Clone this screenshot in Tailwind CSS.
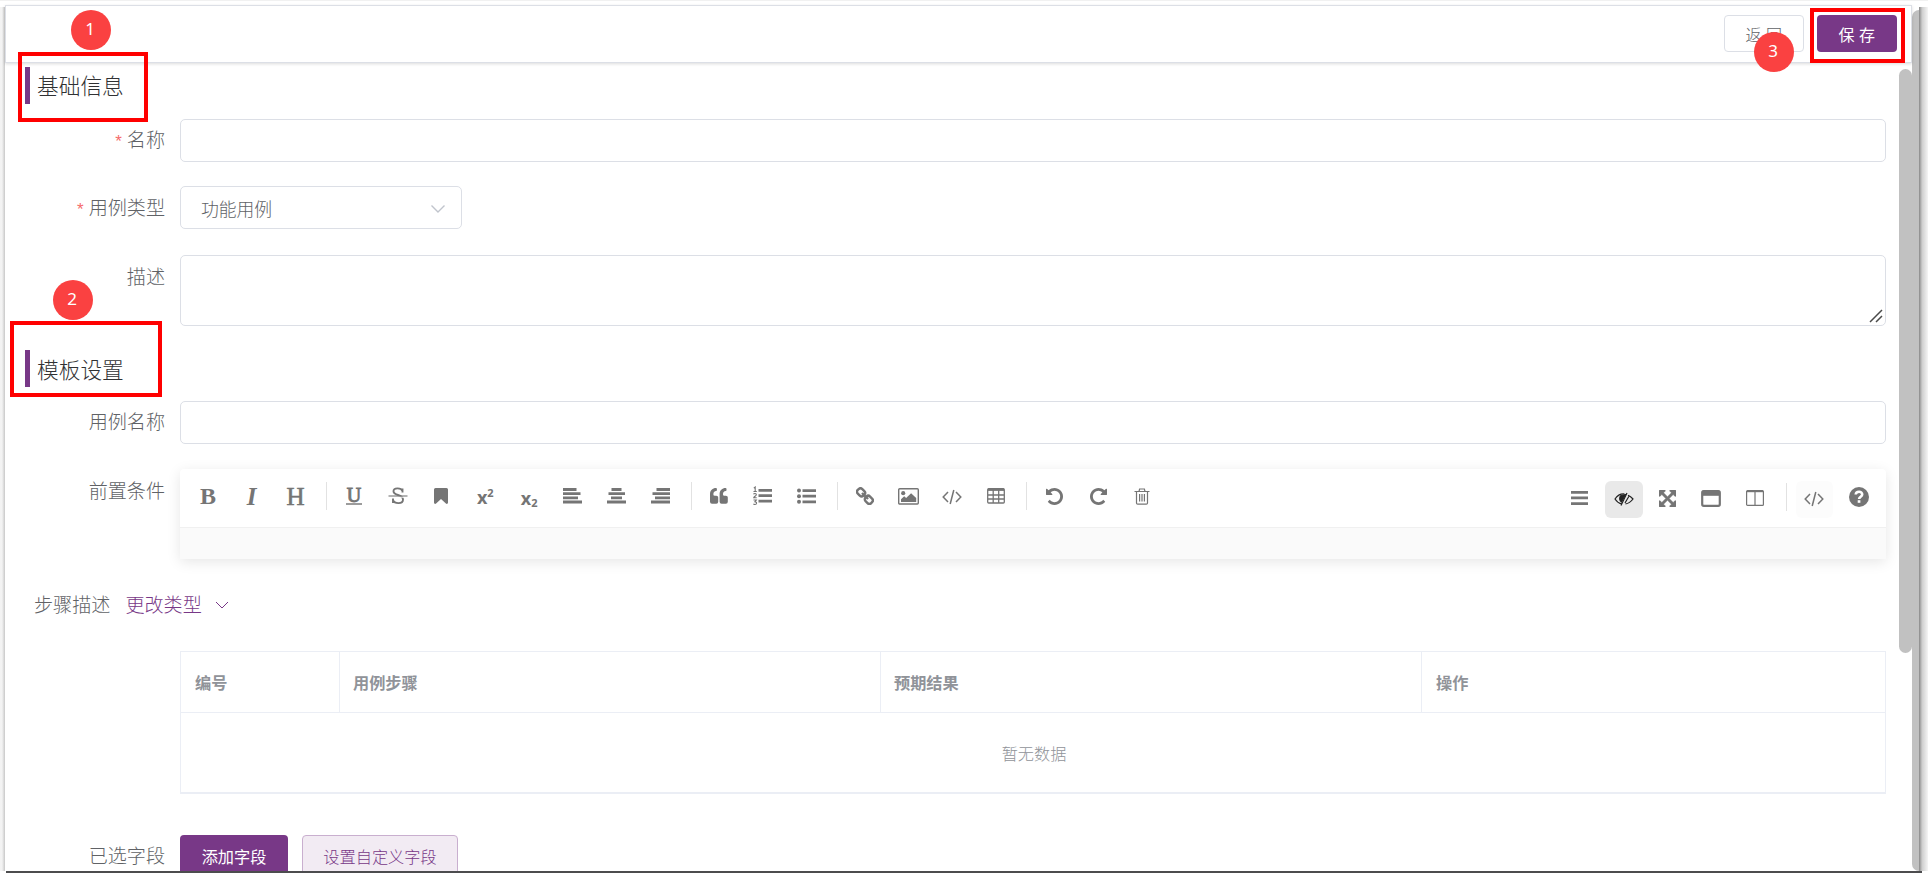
<!DOCTYPE html>
<html lang="zh-CN">
<head>
<meta charset="utf-8">
<title>模板设置</title>
<script src="https://cdn.jsdelivr.net/npm/@tailwindcss/browser@4"></script>
</head>
<body class="w-[1928px] h-[880px] overflow-hidden bg-white relative font-['Noto_Sans_CJK_SC',sans-serif] font-light text-[#606266]">
<div class="h-[5px] border-t border-[#f1f1f1]"></div>
<div class="flex h-[866px]">
  <div class="w-[5px] mt-[2px] bg-linear-to-r from-[#f3f3f3] from-40% to-[#c8c8c8]"></div>

  <div class="w-[1907px] flex flex-col">
    <header class="h-[58px] shrink-0 border border-[#dcdfe6] flex justify-end items-start pt-[9px] pr-[14px] gap-[13px] relative z-10 bg-white shadow-[0_1px_3px_rgba(0,0,0,0.14)]">
      <button class="w-[80px] h-[37px] border border-[#dcdfe6] rounded-[4px] text-[16px] leading-[34px] tracking-[4.6px] pl-[4px]">返回</button>
      <button class="w-[80px] h-[37px] bg-[#783887] text-white rounded-[4px] text-[16px] leading-[36px] tracking-[4.6px] pl-[4px] font-normal">保存</button>
    </header>

    <div class="flex-1 min-h-0 flex">
      <main class="w-[1894px] h-full overflow-hidden pl-[20px] pr-[13px]">
        <h2 class="mt-[4px] h-[37px] border-l-[5px] border-[#783887] pl-[7px] text-[21.7px] leading-[36px] font-light text-[#303133]">基础信息</h2>

        <div class="mt-[15px] flex h-[43px]">
          <div class="w-[140px] text-right text-[19.1px] leading-[40px]"><span class="text-[#f56c6c] text-[17px] mr-[5px] font-['Liberation_Sans'] font-normal">*</span>名称</div>
          <div class="ml-[15px] flex-1 border border-[#dcdfe6] rounded-[5px]"></div>
        </div>
        <div class="mt-[24px] flex h-[43px]">
          <div class="w-[140px] text-right text-[19.1px] leading-[42px]"><span class="text-[#f56c6c] text-[17px] mr-[5px] font-['Liberation_Sans'] font-normal">*</span>用例类型</div>
          <div class="ml-[15px] w-[282px] border border-[#dcdfe6] rounded-[5px] flex items-center justify-between pl-[20px] pr-[15px] text-[17.8px]">
            <span class="leading-[42px] mt-[1px]">功能用例</span>
            <svg class="w-[16px] h-[10px] mt-[2px]" viewBox="0 0 16 10" fill="none" stroke="#c0c4cc" stroke-width="1.4"><path d="M1.5 1.5L8 8l6.500-6.500"/></svg>
          </div>
        </div>
        <div class="mt-[26px] flex h-[71px]">
          <div class="w-[140px] text-right text-[19.1px] leading-[42px]">描述</div>
          <div class="ml-[15px] flex-1 border border-[#dcdfe6] rounded-[5px] flex justify-end items-end pr-[2px] pb-[2px]">
            <svg class="w-[14px] h-[14px]" viewBox="0 0 14 14" stroke="#4a4a4a" stroke-width="1.500"><path d="M1 13L13 1M7 13l6-6"/></svg>
          </div>
        </div>

        <h2 class="mt-[24px] h-[37px] border-l-[5px] border-[#783887] pl-[7px] text-[21.7px] leading-[37px] font-light text-[#303133]">模板设置</h2>

        <div class="mt-[14px] flex h-[43px]">
          <div class="w-[140px] text-right text-[19.1px] leading-[40px]">用例名称</div>
          <div class="ml-[15px] flex-1 border border-[#dcdfe6] rounded-[5px]"></div>
        </div>

        <div class="mt-[25px] flex h-[90px]">
          <div class="w-[140px] text-right text-[19.1px] leading-[42px]">前置条件</div>
          <div class="ml-[15px] w-[1706px] shrink-0 rounded-t-[4px] bg-[#fafafa] shadow-[0_3px_14px_rgba(0,0,0,0.1)] font-normal">
            <div class="h-[59px] bg-white rounded-t-[4px] border-b border-[#f0f0f0] flex items-start justify-between pl-[6px] pr-[5px] text-[#757575]">
              <div class="flex h-[54px] items-center font-['Liberation_Serif'] text-[25px] leading-none">
                <div class="w-[43.8px] text-center font-bold text-[24px]">B</div>
                <div class="w-[43.8px] text-center font-bold italic">I</div>
                <div class="w-[43.8px] text-center text-[25px] [-webkit-text-stroke:0.6px_#757575]">H</div>
                <div class="w-[14.600px] h-[28px] flex justify-center pl-[3px]"><i class="w-px bg-[#e2e2e2] h-[28px]"></i></div>
                <div class="w-[43.8px] flex flex-col items-center pt-[1px]"><span class="text-[20px] leading-[15px] [-webkit-text-stroke:0.9px_#757575]">U</span><i class="w-[16px] h-[2px] bg-[#9c9c9c]"></i></div>
                <div class="w-[43.8px] flex justify-center"><svg class="w-[20px] h-[18px]" viewBox="0 0 20 18" fill="none" stroke="#757575"><path d="M14.500 5.500V1.500M14.500 4C13 0.500 5.500 0.500 5.500 4.300c0 2 2 3 4.500 3.700s5 1.700 5 4.500c0 5-8.500 4.500-10 .7M5 16v-4.500" stroke-width="1.900"/><path d="M0.500 9h19" stroke-width="1.100" stroke="#fff" transform="translate(0 1.100)"/><path d="M0.500 9h19" stroke-width="1.100"/></svg></div>
                <div class="w-[43.8px] flex justify-center"><svg class="w-[14px] h-[16px]" viewBox="0 0 14 16" fill="currentColor"><path d="M1.500 0h11A1.500 1.500 0 0114 1.500v13c0 1.300-1.200 1.900-2.100 1L7 11l-4.900 4.500c-.9.900-2.100.3-2.100-1v-13A1.500 1.500 0 011.500 0z"/></svg></div>
                <div class="w-[43.8px] flex justify-center items-start font-['Noto_Sans'] font-bold text-[18px] leading-[18px] pt-[1px]"><span>x</span><span class="text-[11px] leading-[9px]">2</span></div>
                <div class="w-[43.8px] flex justify-center items-end font-['Noto_Sans'] font-bold text-[18px] leading-[18px] pt-[3px]"><span>x</span><span class="text-[11px] leading-[8px]">2</span></div>
                <div class="w-[43.8px] flex justify-center"><svg class="w-[19px] h-[16px]" viewBox="0 0 19 16" fill="currentColor"><path d="M0 0h13.500v3H0zM0 4.300h17.500v2.800H0zM0 8.600h15v2.600H0zM0 12.600h19v2.800H0z"/></svg></div>
                <div class="w-[43.8px] flex justify-center"><svg class="w-[19px] h-[16px]" viewBox="0 0 19 16" fill="currentColor"><path d="M4.500 0h10v3h-10zM1.500 4.300h16.500v2.800H1.500zM4 8.600h11v2.600H4zM0 12.600h19v2.800H0z"/></svg></div>
                <div class="w-[43.8px] flex justify-center"><svg class="w-[19px] h-[16px]" viewBox="0 0 19 16" fill="currentColor"><path d="M5.500 0H19v3H5.500zM1.500 4.300H19v2.800H1.500zM4 8.600h15v2.600H4zM0 12.600h19v2.800H0z"/></svg></div>
                <div class="w-[14.600px] h-[28px] flex justify-center pl-[3px]"><i class="w-px bg-[#e2e2e2] h-[28px]"></i></div>
                <div class="w-[43.8px] flex justify-center"><svg class="w-[18px] h-[16px]" viewBox="0 0 18 16" fill="currentColor"><path id="q" d="M8.200 9.500v4.300A1.900 1.900 0 016.300 15.700H2A2 2 0 010 13.800V6C0 2.700 2.600.1 6 .1c.6 0 .9.300.9.800v1.300c0 .5-.3.800-.8.800C4.400 3 3.400 4.400 3.400 6v.5c0 .8.500 1.200 1.200 1.200h1.700c1.100 0 1.900.8 1.900 1.800z"/><use href="#q" x="9.600"/></svg></div>
                <div class="w-[43.8px] flex justify-center"><svg class="w-[19px] h-[20px]" viewBox="0 0 19 20" fill="currentColor"><path d="M5.500 3H19v2.800H5.500zM5.500 8.300H19V11H5.500zM5.500 13.800H19v2.800H5.500z"/><path d="M.8 2.200L2.200 1v4.500M.5 5.500h3.300M.5 8.300C1 7.200 3.400 7.300 3.300 8.700 3.200 9.800.8 10.600.7 11.700h3M.5 14h2.800L1.900 15.800c2.400 0 2 2.800 0 2.700-.6 0-1-.2-1.500-.5" fill="none" stroke="currentColor" stroke-width="1.100"/></svg></div>
                <div class="w-[43.8px] flex justify-center"><svg class="w-[19px] h-[16px]" viewBox="0 0 19 16" fill="currentColor"><circle cx="2" cy="2.500" r="2"/><circle cx="2" cy="8.200" r="2"/><circle cx="2" cy="13.800" r="2"/><path d="M5.500 1.200H19V4H5.500zM5.500 6.800H19v2.800H5.500zM5.500 12.400H19v2.800H5.500z"/></svg></div>
                <div class="w-[14.600px] h-[28px] flex justify-center pl-[3px]"><i class="w-px bg-[#e2e2e2] h-[28px]"></i></div>
                <div class="w-[43.8px] flex justify-center"><svg class="w-[18px] h-[18px]" viewBox="0 0 18 18" fill="none" stroke="currentColor" stroke-width="2.400"><rect x="1.200" y="2.200" width="8" height="6.400" rx="2.600" transform="rotate(45 5.200 5.200)"/><rect x="8.800" y="9.600" width="8" height="6.400" rx="2.600" transform="rotate(45 12.800 12.800)"/><path d="M6 6l6 6"/></svg></div>
                <div class="w-[43.8px] flex justify-center"><svg class="w-[21px] h-[17px]" viewBox="0 0 21 17" fill="currentColor"><rect x=".7" y=".7" width="19.600" height="15.300" rx="1" fill="none" stroke="currentColor" stroke-width="1.400"/><circle cx="5.200" cy="5.200" r="2.100"/><path d="M3 14v-2.800l3.200-3 1.900 1.700 5-4.700L18.200 10v4z"/></svg></div>
                <div class="w-[43.8px] flex justify-center"><svg class="w-[20px] h-[16px] mt-[2px]" viewBox="0 0 20 16" fill="none" stroke="currentColor" stroke-width="1.500"><path d="M6 3L1.200 8 6 13M14 3l4.800 5L14 13M11.800 1L8.200 15"/></svg></div>
                <div class="w-[43.8px] flex justify-center"><svg class="w-[18px] h-[16px]" viewBox="0 0 18 16" fill="none" stroke="currentColor" stroke-width="1.300"><rect x=".7" y=".7" width="16.600" height="14.300" rx="1"/><path d="M1 1.700h16" stroke-width="2.400"/><path d="M1 7h16M1 11h16M6.200 2v13M11.700 2v13"/></svg></div>
                <div class="w-[14.600px] h-[28px] flex justify-center pl-[3px]"><i class="w-px bg-[#e2e2e2] h-[28px]"></i></div>
                <div class="w-[43.8px] flex justify-center"><svg class="w-[17px] h-[17px]" viewBox="0 128 1536 1536" fill="currentColor"><path id="undo" d="M1536 896q0 156-61 298t-164 245-245 164-298 61q-172 0-327-72.500t-264-204.500q-7-10-6.500-22.500t8.500-20.500l137-138q10-9 25-9 16 2 23 12 73 95 179 147t225 52q104 0 198.500-40.500t163.500-109.500 109.500-163.500 40.500-198.500-40.500-198.500-109.500-163.500-163.500-109.500-198.500-40.500q-98 0-188 35.500t-160 101.500l137 138q31 30 14 69-17 40-59 40h-448q-26 0-45-19t-19-45v-448q0-42 40-59 39-17 69 14l130 129q107-101 244.500-156.500t284.500-55.500q156 0 298 61t245 164 164 245 61 298z"/></svg></div>
                <div class="w-[43.8px] flex justify-center"><svg class="w-[17px] h-[17px]" viewBox="0 128 1536 1536" fill="currentColor"><use href="#undo" transform="matrix(-1 0 0 1 1536 0)"/></svg></div>
                <div class="w-[43.8px] flex justify-center"><svg class="w-[16px] h-[17px]" viewBox="0 0 16 17" fill="none" stroke="currentColor" stroke-width="1.200"><path d="M.5 3.500h15M5 3.500L5.600 1h4.800l.6 2.500M2.500 3.500V15c0 .7.500 1.200 1.200 1.200h8.600c.7 0 1.200-.5 1.200-1.200V3.500M5.600 6v7.500M8 6v7.500M10.400 6v7.500"/></svg></div>
              </div>
              <div class="flex h-[58px] items-center">
                <div class="w-[43.8px] flex justify-center"><svg class="w-[17px] h-[14px]" viewBox="0 0 17 14" fill="currentColor"><path d="M0 0h17v2.700H0zM0 5.600h17v2.700H0zM0 11.200h17v2.700H0z"/></svg></div>
                <div class="w-[43.8px] flex justify-center"><div class="w-[38px] h-[37px] mt-[2px] ml-[1px] rounded-[6px] bg-[#e9e9e9] flex items-center justify-center text-[#222]"><svg class="w-[20px] h-[14px]" viewBox="0 0 20 14" fill="none" stroke="currentColor" stroke-width="1.200"><path d="M10.500 2C6 1.600 3 4 1 7c1.500 2.500 3.700 4.200 6.500 4.800M14 3.300c2 .9 3.600 2.200 5 3.700-2 2.700-4.500 4.500-7.500 5M13 1L7 13.500M14.800 4.500L11 11"/><path d="M7 3.500C5 5.500 5.300 8.500 7.500 10L11.500 2.500z" fill="currentColor"/></svg></div></div>
                <div class="w-[43.8px] flex justify-center pl-px"><svg class="w-[17px] h-[17px]" viewBox="0 0 1536 1536" fill="currentColor" stroke="currentColor" stroke-width="40"><path d="M1283 413l-355 355 355 355 144-144q29-31 70-14 39 17 39 59v448q0 26-19 45t-45 19h-448q-42 0-59-40-17-39 14-69l144-144-355-355-355 355 144 144q31 30 14 69-17 40-59 40h-448q-26 0-45-19t-19-45v-448q0-42 40-59 39-17 69 14l144 144 355-355-355-355-144 144q-19 19-45 19-12 0-24-5-40-17-40-59v-448q0-26 19-45t45-19h448q42 0 59 40 17 39-14 69l-144 144 355 355 355-355-144-144q-31-30-14-69 17-40 59-40h448q26 0 45 19t19 45v448q0 42-39 59-13 5-25 5-26 0-45-19z"/></svg></div>
                <div class="w-[43.8px] flex justify-center"><svg class="w-[20px] h-[17px]" viewBox="0 0 20 17" fill="none" stroke="currentColor"><rect x="1.200" y="1.200" width="17.600" height="14.600" rx="1.500" stroke-width="2.200"/><path d="M1 3.300h18" stroke-width="5"/></svg></div>
                <div class="w-[43.8px] flex justify-center"><svg class="w-[18px] h-[16px]" viewBox="0 0 18 16" fill="none" stroke="currentColor"><rect x=".6" y=".6" width="16.800" height="14.800" rx="1" stroke-width="1.200"/><path d="M1 1.200h16" stroke-width="2"/><path d="M9 1v15" stroke-width="1.200"/></svg></div>
                <div class="w-[17px] h-[28px] flex justify-center pl-[4px]"><i class="w-px bg-[#e2e2e2] h-[28px] -mt-[1px]"></i></div>
                <div class="w-[43.8px] flex justify-center"><div class="w-[37px] h-[37px] mt-[2px] mr-[2px] rounded-[6px] bg-[#fcfcfc] flex items-center justify-center"><svg class="w-[20px] h-[16px]" viewBox="0 0 20 16" fill="none" stroke="currentColor" stroke-width="1.500"><path d="M6 3L1.200 8 6 13M14 3l4.800 5L14 13M11.800 1L8.200 15"/></svg></div></div>
                <div class="w-[43.8px] flex justify-center"><svg class="w-[20px] h-[20px] -mt-[2px]" viewBox="0 0 20 20"><circle cx="10" cy="10" r="10" fill="#757575"/><path d="M6.700 7.500C7 3.700 13.400 3.900 13.200 7.500c-.1 2.200-3 2.300-3.100 4.500" fill="none" stroke="#fff" stroke-width="2.600"/><rect x="8.700" y="13.200" width="2.700" height="2.600" fill="#fff"/></svg></div>
              </div>
            </div>
          </div>
        </div>

        <div class="mt-[24px] flex h-[42px] items-center text-[19.1px] leading-[42px] pl-[9px]">
          <span>步骤描述</span>
          <span class="ml-[15px] text-[#783887]">更改类型</span>
          <svg class="ml-[13px] mt-[2px] w-[14px] h-[8px]" viewBox="0 0 14 8" fill="none" stroke="#783887" stroke-width="1"><path d="M1 1l6 6 6-6"/></svg>
        </div>

        <div class="mt-[26px] ml-[155px] w-[1706px] h-[143px] border border-b-2 border-[#ebeef5] text-[16.2px] text-[#909399] font-normal">
          <div class="grid grid-cols-[159px_541px_541px_1fr] h-[61px] border-b border-[#ebeef5] font-bold leading-[61px]">
            <div class="pl-[14px] border-r border-[#ebeef5]">编号</div>
            <div class="pl-[13px] border-r border-[#ebeef5]">用例步骤</div>
            <div class="pl-[13px] border-r border-[#ebeef5]">预期结果</div>
            <div class="pl-[14px]">操作</div>
          </div>
          <div class="h-[79px] leading-[81px] text-center pl-[2px] font-light">暂无数据</div>
        </div>

        <div class="mt-[41px] flex h-[43px]">
          <div class="w-[140px] text-right text-[19.1px] leading-[41px]">已选字段</div>
          <button class="ml-[15px] w-[108px] bg-[#783887] rounded-[4px] text-white text-[16.2px] leading-[43px] font-normal">添加字段</button>
          <button class="ml-[14px] w-[156px] bg-[#f2ebf3] border border-[#c9afcf] rounded-[4px] text-[#783887] text-[16.2px] leading-[41px]">设置自定义字段</button>
        </div>
      </main>
      <div class="w-[13px] pt-[6px]"><div class="h-[584px] bg-[#c1c1c1] rounded-full"></div></div>
    </div>
  </div>

  <div class="w-[7px] mt-[5px] bg-[#c1c1c1] rounded-l-[7px]"></div>
  <div class="w-[9px] mt-[2px] bg-linear-to-r from-[#888] via-[#cfcfcf] via-35% to-[#f5f5f5]"></div>
</div>
<div class="h-[2px] mx-[6px] bg-[#4c4c4e]"></div>

<div class="absolute left-[18px] top-[52px] w-[130px] h-[70px] border-4 border-[#f00] z-20"></div>
<div class="absolute left-[10px] top-[321px] w-[152px] h-[76px] border-4 border-[#f00] z-20"></div>
<div class="absolute left-[1810px] top-[8px] w-[95px] h-[55px] border-4 border-[#f00] z-20"></div>
<div class="absolute left-[71px] top-[10px] size-[40px] rounded-full bg-[#fa4141] text-white text-center pr-[2px] font-['Noto_Sans'] font-normal text-[17px] leading-[38px] z-20">1</div>
<div class="absolute left-[53px] top-[280px] size-[40px] rounded-full bg-[#fa4141] text-white text-center pr-[2px] font-['Noto_Sans'] font-normal text-[17px] leading-[38px] z-20">2</div>
<div class="absolute left-[1754px] top-[32px] size-[40px] rounded-full bg-[#fa4141] text-white text-center pr-[2px] font-['Noto_Sans'] font-normal text-[17px] leading-[38px] z-20">3</div>
</body>
</html>
